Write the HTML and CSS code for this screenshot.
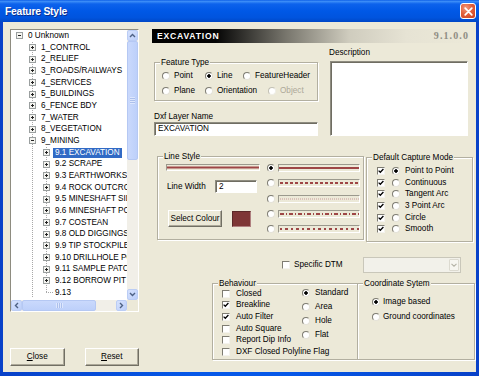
FILE: index.html
```html
<!DOCTYPE html>
<html lang="en">
<head>
<meta charset="utf-8">
<title>Feature Style</title>
<link rel="stylesheet" href="styles.css">
</head>
<body>
<div class="window">
  <div class="titlebar">
    <span class="title">Feature Style</span>
    <span class="close-x"><svg width="9" height="9" viewBox="0 0 9 9"><path d="M1.2 1.2 L7.8 7.8 M7.8 1.2 L1.2 7.8" stroke="#fff" stroke-width="1.7" stroke-linecap="round"/></svg></span>
  </div>
  <div class="frame">
    <div class="client">
      <div class="left-col">
        <div class="tree">
          <div class="tree-content">
            <div class="tree-row lvl0"><span class="exp minus"></span><span class="tree-label">0 Unknown</span></div>
            <div class="level1">
              <div class="tree-row lvl1"><span class="exp"></span><span class="tree-label">1_CONTROL</span></div>
              <div class="tree-row lvl1"><span class="exp"></span><span class="tree-label">2_RELIEF</span></div>
              <div class="tree-row lvl1"><span class="exp"></span><span class="tree-label">3_ROADS/RAILWAYS</span></div>
              <div class="tree-row lvl1"><span class="exp"></span><span class="tree-label">4_SERVICES</span></div>
              <div class="tree-row lvl1"><span class="exp"></span><span class="tree-label">5_BUILDINGS</span></div>
              <div class="tree-row lvl1"><span class="exp"></span><span class="tree-label">6_FENCE BDY</span></div>
              <div class="tree-row lvl1"><span class="exp"></span><span class="tree-label">7_WATER</span></div>
              <div class="tree-row lvl1"><span class="exp"></span><span class="tree-label">8_VEGETATION</span></div>
              <div class="tree-row lvl1"><span class="exp minus"></span><span class="tree-label">9_MINING</span></div>
              <div class="level2">
                <div class="tree-row lvl2"><span class="exp"></span><span class="tree-label sel">9.1 EXCAVATION</span></div>
                <div class="tree-row lvl2"><span class="exp"></span><span class="tree-label">9.2 SCRAPE</span></div>
                <div class="tree-row lvl2"><span class="exp"></span><span class="tree-label">9.3 EARTHWORKS</span></div>
                <div class="tree-row lvl2"><span class="exp"></span><span class="tree-label">9.4 ROCK OUTCROP</span></div>
                <div class="tree-row lvl2"><span class="exp"></span><span class="tree-label">9.5 MINESHAFT SIDE</span></div>
                <div class="tree-row lvl2"><span class="exp"></span><span class="tree-label">9.6 MINESHAFT PORTAL</span></div>
                <div class="tree-row lvl2"><span class="exp"></span><span class="tree-label">9.7 COSTEAN</span></div>
                <div class="tree-row lvl2"><span class="exp"></span><span class="tree-label">9.8 OLD DIGGINGS</span></div>
                <div class="tree-row lvl2"><span class="exp"></span><span class="tree-label">9.9 TIP STOCKPILE</span></div>
                <div class="tree-row lvl2"><span class="exp"></span><span class="tree-label">9.10 DRILLHOLE POINT</span></div>
                <div class="tree-row lvl2"><span class="exp"></span><span class="tree-label">9.11 SAMPLE PATCH</span></div>
                <div class="tree-row lvl2"><span class="exp"></span><span class="tree-label">9.12 BORROW PIT EDGE</span></div>
                <div class="tree-row lvl2"><span class="stub"></span><span class="tree-label">9.13</span></div>
              </div>
            </div>
          </div>
          <div class="vscroll">
            <div class="sb-btn"><svg width="7" height="5" viewBox="0 0 7 5"><path d="M1 4 L3.5 1.5 L6 4" fill="none" stroke="#4D6185" stroke-width="1.4"/></svg></div>
            <div class="sb-thumb vthumb"><span class="grip-v"></span></div>
            <div class="sb-track"></div>
            <div class="sb-btn"><svg width="7" height="5" viewBox="0 0 7 5"><path d="M1 1 L3.5 3.5 L6 1" fill="none" stroke="#4D6185" stroke-width="1.4"/></svg></div>
          </div>
          <div class="hscroll">
            <div class="sb-btn"><svg width="5" height="7" viewBox="0 0 5 7"><path d="M4 1 L1.5 3.5 L4 6" fill="none" stroke="#4D6185" stroke-width="1.4"/></svg></div>
            <div class="sb-thumb hthumb"><span class="grip-h"></span></div>
            <div class="sb-track"></div>
            <div class="sb-btn"><svg width="5" height="7" viewBox="0 0 5 7"><path d="M1 1 L3.5 3.5 L1 6" fill="none" stroke="#4D6185" stroke-width="1.4"/></svg></div>
          </div>
          <div class="sb-corner"></div>
        </div>
        <div class="btn-row">
          <div class="btn wide"><u>C</u>lose</div>
          <div class="btn wide"><u>R</u>eset</div>
        </div>
      </div>

      <div class="right-col">
        <div class="header"><span class="hname">EXCAVATION</span><span class="version">9.1.0.0</span></div>

        <div class="top-section">
          <div class="ft-col">
            <div class="group ft-group">
              <span class="legend">Feature Type</span>
              <div class="ft-grid">
                <div class="opt"><span class="radio"></span>Point</div>
                <div class="opt"><span class="radio on"></span>Line</div>
                <div class="opt"><span class="radio"></span>FeatureHeader</div>
                <div class="opt"><span class="radio"></span>Plane</div>
                <div class="opt"><span class="radio"></span>Orientation</div>
                <div class="opt disabled obj"><span class="radio"></span>Object</div>
              </div>
            </div>
            <div class="lbl dxf-label">Dxf Layer Name</div>
            <div class="field dxf-input">EXCAVATION</div>
          </div>
          <div class="desc-col">
            <div class="lbl desc-label">Description</div>
            <div class="field desc-box"></div>
          </div>
        </div>

        <div class="mid-section">
          <div class="group ls-group">
            <span class="legend">Line Style</span>
            <div class="ls-left">
              <div class="swatch main-swatch"><svg width="92" height="5" viewBox="0 0 92 5"><line x1="0" y1="2.5" x2="92" y2="2.5" stroke="#9E4646" stroke-width="2"/></svg></div>
              <div class="lw-row">
                <span class="lw-label">Line Width</span>
                <div class="field lw-input">2</div>
              </div>
              <div class="colour-row">
                <div class="btn colour-btn">Select Colour</div>
                <div class="colour-swatch"></div>
              </div>
            </div>
            <div class="ls-right">
              <div class="ls-opt"><span class="radio on"></span><div class="swatch"><svg width="80" height="6" viewBox="0 0 80 6"><line x1="0" y1="3" x2="80" y2="3" stroke="#9E4646" stroke-width="2"/></svg></div></div>
              <div class="ls-opt"><span class="radio"></span><div class="swatch"><svg width="80" height="6" viewBox="0 0 80 6"><line x1="1" y1="3" x2="80" y2="3" stroke="#9E4646" stroke-width="2" stroke-dasharray="3 2"/></svg></div></div>
              <div class="ls-opt"><span class="radio"></span><div class="swatch"><svg width="80" height="6" viewBox="0 0 80 6"><line x1="1" y1="3" x2="80" y2="3" stroke="#C99A9A" stroke-width="1" stroke-dasharray="1 1"/></svg></div></div>
              <div class="ls-opt"><span class="radio"></span><div class="swatch"><svg width="80" height="6" viewBox="0 0 80 6"><line x1="1" y1="3" x2="80" y2="3" stroke="#9E4646" stroke-width="2" stroke-dasharray="4 2 1 2"/></svg></div></div>
              <div class="ls-opt"><span class="radio"></span><div class="swatch"><svg width="80" height="6" viewBox="0 0 80 6"><line x1="1" y1="3" x2="80" y2="3" stroke="#9E4646" stroke-width="2" stroke-dasharray="2 3 3 3"/></svg></div></div>
            </div>
          </div>

          <div class="group cm-group">
            <span class="legend">Default Capture Mode</span>
            <div class="cm-list">
              <div class="cm-row"><span class="check on"><svg width="6" height="6" viewBox="0 0 6 6"><path d="M0.6 2.6 L2.3 4.3 L5.4 1" fill="none" stroke="#000" stroke-width="1.3"/></svg></span><span class="radio on"></span><span class="cm-text">Point to Point</span></div>
              <div class="cm-row"><span class="check on"><svg width="6" height="6" viewBox="0 0 6 6"><path d="M0.6 2.6 L2.3 4.3 L5.4 1" fill="none" stroke="#000" stroke-width="1.3"/></svg></span><span class="radio"></span><span class="cm-text">Continuous</span></div>
              <div class="cm-row"><span class="check on"><svg width="6" height="6" viewBox="0 0 6 6"><path d="M0.6 2.6 L2.3 4.3 L5.4 1" fill="none" stroke="#000" stroke-width="1.3"/></svg></span><span class="radio"></span><span class="cm-text">Tangent Arc</span></div>
              <div class="cm-row"><span class="check on"><svg width="6" height="6" viewBox="0 0 6 6"><path d="M0.6 2.6 L2.3 4.3 L5.4 1" fill="none" stroke="#000" stroke-width="1.3"/></svg></span><span class="radio"></span><span class="cm-text">3 Point Arc</span></div>
              <div class="cm-row"><span class="check on"><svg width="6" height="6" viewBox="0 0 6 6"><path d="M0.6 2.6 L2.3 4.3 L5.4 1" fill="none" stroke="#000" stroke-width="1.3"/></svg></span><span class="radio"></span><span class="cm-text">Circle</span></div>
              <div class="cm-row"><span class="check on"><svg width="6" height="6" viewBox="0 0 6 6"><path d="M0.6 2.6 L2.3 4.3 L5.4 1" fill="none" stroke="#000" stroke-width="1.3"/></svg></span><span class="radio"></span><span class="cm-text">Smooth</span></div>
            </div>
          </div>
        </div>

        <div class="dtm-row">
          <span class="check"></span>
          <span class="dtm-label">Specific DTM</span>
          <div class="combo"><span class="combo-btn"><svg width="6" height="4" viewBox="0 0 6 4"><path d="M0.5 0.8 L3 3.2 L5.5 0.8" fill="none" stroke="#B4B2A6" stroke-width="1.1"/></svg></span></div>
        </div>

        <div class="bottom-section">
          <div class="group beh-group">
            <span class="legend">Behaviour</span>
            <div class="beh-checks">
              <div class="beh-row"><span class="check"></span><span class="beh-text">Closed</span></div>
              <div class="beh-row"><span class="check on"><svg width="6" height="6" viewBox="0 0 6 6"><path d="M0.6 2.6 L2.3 4.3 L5.4 1" fill="none" stroke="#000" stroke-width="1.3"/></svg></span><span class="beh-text">Breakline</span></div>
              <div class="beh-row"><span class="check on"><svg width="6" height="6" viewBox="0 0 6 6"><path d="M0.6 2.6 L2.3 4.3 L5.4 1" fill="none" stroke="#000" stroke-width="1.3"/></svg></span><span class="beh-text">Auto Filter</span></div>
              <div class="beh-row"><span class="check"></span><span class="beh-text">Auto Square</span></div>
              <div class="beh-row"><span class="check"></span><span class="beh-text">Report Dip Info</span></div>
              <div class="beh-row"><span class="check"></span><span class="beh-text">DXF Closed Polyline Flag</span></div>
            </div>
            <div class="beh-radios">
              <div class="beh-rrow"><span class="radio on"></span><span class="beh-rtext">Standard</span></div>
              <div class="beh-rrow"><span class="radio"></span><span class="beh-rtext">Area</span></div>
              <div class="beh-rrow"><span class="radio"></span><span class="beh-rtext">Hole</span></div>
              <div class="beh-rrow"><span class="radio"></span><span class="beh-rtext">Flat</span></div>
            </div>
          </div>
          <div class="group coord-group">
            <span class="legend">Coordinate Sytem</span>
            <div class="coord-list">
              <div class="coord-row"><span class="radio on"></span><span class="coord-text">Image based</span></div>
              <div class="coord-row"><span class="radio"></span><span class="coord-text">Ground coordinates</span></div>
            </div>
          </div>
        </div>
      </div>
    </div>
  </div>
</div>
</body>
</html>
```

FILE: styles.css
```css
* { box-sizing: border-box; }
html, body { margin: 0; padding: 0; }
body {
  width: 479px;
  height: 376px;
  overflow: hidden;
  background: #ECE9D8;
  font-family: "Liberation Sans", Arial, sans-serif;
  font-size: 8.2px;
  line-height: 10px;
  color: #000;
}

.window { width: 479px; height: 376px; display: flex; flex-direction: column; }

.titlebar {
  height: 22px;
  flex: none;
  display: flex;
  align-items: center;
  justify-content: space-between;
  padding: 0 3px 0 5px;
  background: linear-gradient(to bottom, #0A5CE6 0%, #3D8EF8 6%, #0D62EC 18%, #0058E6 50%, #0054DE 80%, #0047C6 100%);
}
.title {
  color: #fff;
  font-weight: bold;
  font-size: 10.3px;
  letter-spacing: -0.2px;
  padding-top: 1px;
  text-shadow: 1px 1px 0 #0B2F8C;
}
.close-x {
  width: 16px;
  height: 16px;
  border: 1px solid #fff;
  border-radius: 3px;
  display: flex;
  align-items: center;
  justify-content: center;
  background: radial-gradient(circle at 35% 30%, #F19A7C 0%, #E2603C 45%, #C9401F 100%);
}

.frame { flex: 1; display: flex; padding: 0 3px 4px 3px; background: linear-gradient(to right, #0841C8, #0658E8 40%, #0658E8 60%, #0841C8); }
.client { flex: 1; display: flex; background: #ECE9D8; }

/* Left column */
.left-col { width: 129px; margin-left: 7px; padding-top: 7px; display: flex; flex-direction: column; }
.tree {
  height: 283px;
  display: grid;
  grid-template-columns: 116px 11px;
  grid-template-rows: 270px 11px;
  border: 1px solid;
  border-color: #8E8C80 #FFFFFF #FFFFFF #8E8C80;
  background: #fff;
}
.tree-content { overflow: hidden; background: #fff; white-space: nowrap; }
.tree-row { height: 11.68px; display: flex; align-items: center; }
.lvl0 { padding-left: 5px; }
.lvl1 { padding-left: 18px; }
.lvl2 { padding-left: 32px; }
.level1 {
  background-image: repeating-linear-gradient(to bottom, #A8A8A8 0 1px, transparent 1px 2px);
  background-size: 1px 100%;
  background-position: 21px 0;
  background-repeat: no-repeat;
}
.level2 {
  background-image: repeating-linear-gradient(to bottom, #A8A8A8 0 1px, transparent 1px 2px);
  background-size: 1px calc(100% - 5.84px);
  background-position: 35px 0;
  background-repeat: no-repeat;
}
.exp {
  flex: none;
  width: 7px;
  height: 7px;
  margin-right: 3px;
  border: 1px solid #9A9F9F;
  background-color: #F4F4F0;
  background-image: linear-gradient(#222, #222), linear-gradient(#222, #222);
  background-size: 3px 1px, 1px 3px;
  background-position: center, center;
  background-repeat: no-repeat;
}
.exp.minus { background-image: linear-gradient(#222, #222); background-size: 3px 1px; }
.stub {
  flex: none;
  width: 10px;
  height: 1px;
  background-image: repeating-linear-gradient(to right, #A8A8A8 0 1px, transparent 1px 2px);
  background-size: 7px 1px;
  background-position: 3px 0;
  background-repeat: no-repeat;
}
.tree-label { padding: 0 2px; line-height: 10px; }
.tree-label.sel { background: #316AC5; color: #fff; }

.vscroll, .hscroll { display: flex; background: #F3F1EA; }
.vscroll { flex-direction: column; }
.sb-btn {
  flex: none;
  width: 11px;
  height: 11px;
  display: flex;
  align-items: center;
  justify-content: center;
  border: 1px solid #BBCDF5;
  border-radius: 2px;
  background: linear-gradient(135deg, #D6E2FE, #BCCFFA);
}
.sb-thumb {
  flex: none;
  border: 1px solid #B5C8F3;
  border-radius: 2px;
  background: linear-gradient(to right, #CAD9FC, #BDD0FA);
  display: flex;
  align-items: center;
  justify-content: center;
}
.vthumb { height: 119px; }
.hthumb { width: 74px; background: linear-gradient(to bottom, #CAD9FC, #BDD0FA); }
.sb-track { flex: 1; background: #F1EFE8; }
.grip-v { width: 5px; height: 7px; background: repeating-linear-gradient(to bottom, #EEF3FF 0 1px, #9DB2E2 1px 2px); opacity: 0.6; }
.grip-h { width: 7px; height: 5px; background: repeating-linear-gradient(to right, #EEF3FF 0 1px, #9DB2E2 1px 2px); opacity: 0.6; }
.sb-corner { background: #ECE9D8; }

.btn-row { margin-top: 36px; display: flex; gap: 20px; }
.btn {
  height: 18px;
  display: flex;
  align-items: center;
  justify-content: center;
  background: #ECE9D8;
  border: 1px solid;
  border-color: #FFFFFF #716F64 #716F64 #FFFFFF;
  box-shadow: inset -1px -1px 0 #ACA899;
}
.btn.wide { width: 55px; }

/* Right column */
.right-col { width: 324px; margin-left: 13px; padding-top: 7px; display: flex; flex-direction: column; }
.header {
  width: 318px;
  height: 14px;
  display: flex;
  align-items: center;
  justify-content: space-between;
  padding: 0 1px 0 5px;
  background: linear-gradient(to right, #000 0%, #050505 20%, #77756C 42%, #CFCCBE 62%, #E6E3D4 80%, #ECE9D8 100%);
}
.hname { color: #fff; font-weight: bold; font-size: 8.6px; letter-spacing: 0.8px; }
.version { font-family: "Liberation Serif", serif; font-size: 10px; letter-spacing: 1.1px; color: #8F8D84; font-weight: bold; }

.group {
  position: relative;
  border: 1px solid #B2AFA0;
  box-shadow: inset 1px 1px 0 #FFFFFF, 1px 1px 0 #FFFFFF;
}
.legend {
  position: absolute;
  top: -6px;
  left: 5px;
  padding: 0 1px;
  background: #ECE9D8;
  line-height: 11px;
  white-space: nowrap;
}

.field {
  background: #fff;
  border: 1px solid;
  border-color: #8E8C80 #FFFFFF #FFFFFF #8E8C80;
  box-shadow: inset 1px 1px 0 #6F6D62;
  padding-left: 3px;
  display: flex;
  align-items: center;
}

.radio {
  flex: none;
  width: 8px;
  height: 8px;
  border-radius: 50%;
  background: #fff;
  border: 1px solid;
  border-color: #7E7C72 #E4E2D8 #E4E2D8 #7E7C72;
}
.radio.on { background: radial-gradient(circle, #000 0 1.5px, #fff 1.9px); }
.check {
  flex: none;
  width: 8px;
  height: 8px;
  background: #fff;
  border: 1px solid;
  border-color: #7E7C72 #F4F3EE #F4F3EE #7E7C72;
  display: flex;
  align-items: center;
  justify-content: center;
}

/* top section */
.top-section { display: flex; height: 93px; }
.ft-col { width: 164px; margin-left: 2px; display: flex; flex-direction: column; }
.ft-group { margin-top: 19px; height: 39px; }
.ft-grid {
  padding: 5px 0 0 7px;
  display: grid;
  grid-template-columns: 43px 38px auto;
  grid-auto-rows: 15px;
}
.opt { display: flex; align-items: center; white-space: nowrap; }
.opt .radio { margin-right: 4px; }
.opt.obj { margin-left: 25px; }
.opt.disabled { color: #ACA899; }
.opt.disabled .radio { border-color: #C2C0B4 #EEEDE6 #EEEDE6 #C2C0B4; }
.dxf-label { margin-top: 11px; height: 10px; }
.dxf-input { height: 14px; }
.desc-col { width: 138px; margin-left: 12px; display: flex; flex-direction: column; }
.desc-label { margin-top: 5px; margin-left: -1px; height: 10px; }
.desc-box { margin-top: 3px; height: 75px; }

/* mid section */
.mid-section { display: flex; align-items: flex-start; margin-top: 20px; }
.ls-group { margin-left: 5px; width: 207px; height: 84px; display: flex; }
.ls-left { width: 94px; margin-left: 8px; padding-top: 7px; display: flex; flex-direction: column; }
.swatch {
  background: #ECE9D8;
  border: 1px solid;
  border-color: #9B998D #FFFFFF #FFFFFF #9B998D;
  display: flex;
  align-items: center;
}
.main-swatch { height: 7px; width: 94px; }
.lw-row { margin-top: 9px; height: 13px; display: grid; grid-template-columns: 49px 42px; align-items: center; }
.lw-label { padding-left: 1px; }
.lw-input { height: 13px; }
.colour-row { margin-top: 17px; display: flex; }
.colour-btn { width: 54px; height: 17px; margin-left: 2px; }
.colour-swatch {
  width: 19px;
  height: 16px;
  margin-left: 10px;
  margin-top: 1px;
  background: #7E3636;
  border: 1px solid;
  border-color: #5B2828 #B08080 #B08080 #5B2828;
}
.ls-right { margin-left: 7px; padding-top: 3.5px; display: flex; flex-direction: column; }
.ls-opt { height: 15.25px; display: flex; align-items: center; }
.ls-opt .swatch { margin-left: 3px; width: 82px; height: 8px; }

.cm-group { margin-left: 2px; margin-top: 1px; width: 107px; height: 85px; }
.cm-list { padding: 7px 0 0 10px; }
.cm-row { height: 11.7px; display: flex; align-items: center; white-space: nowrap; }
.cm-row .radio { margin-left: 7px; }
.cm-text { margin-left: 5px; }

/* DTM row */
.dtm-row { margin-top: 15px; height: 16px; padding-left: 130px; display: flex; align-items: center; }
.dtm-label { margin-left: 4px; width: 69px; white-space: nowrap; }
.combo {
  width: 98px;
  height: 16px;
  border: 1px solid #C9C7BA;
  background: #F2F1EA;
  display: flex;
  justify-content: flex-end;
  padding: 1px;
}
.combo-btn {
  width: 10px;
  display: flex;
  align-items: center;
  justify-content: center;
  border: 1px solid #DCDAD0;
  border-radius: 1px;
  background: #F7F6F1;
}

/* bottom section */
.bottom-section { margin-top: 10px; display: flex; height: 77px; }
.beh-group { margin-left: 60px; width: 146px; height: 77px; display: flex; }
.beh-checks { width: 89px; padding: 4px 0 0 9px; white-space: nowrap; }
.beh-row { height: 11.6px; display: flex; align-items: center; }
.beh-text { margin-left: 6px; }
.beh-radios { padding-top: 2px; }
.beh-rrow { height: 14px; display: flex; align-items: center; }
.beh-rtext { margin-left: 5px; }
.coord-group { margin-left: -1px; width: 118px; height: 77px; }
.coord-list { padding: 10.5px 0 0 14px; }
.coord-row { height: 15px; display: flex; align-items: center; white-space: nowrap; }
.coord-text { margin-left: 3px; }
```
